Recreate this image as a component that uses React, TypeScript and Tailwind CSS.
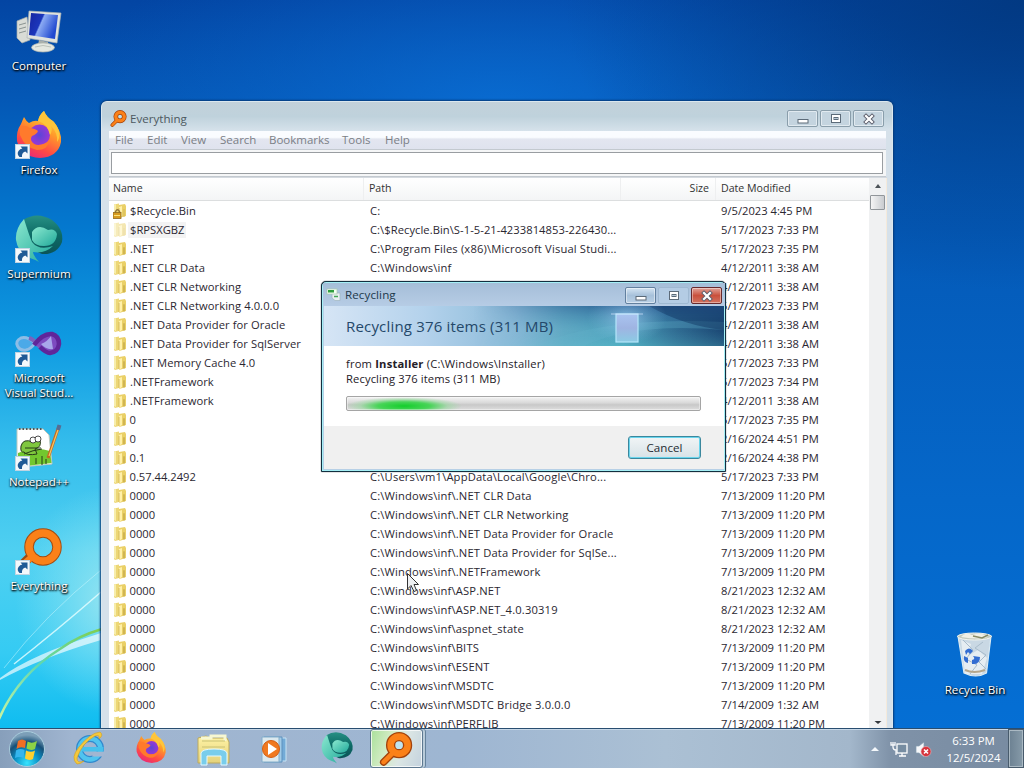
import React from "react";

const FONT = "font-['Open_Sans','Noto_Sans',sans-serif]";

const rows: [string, string, string][] = [
  ["$Recycle.Bin", "C:", "9/5/2023 4:45 PM"],
  ["$RPSXGBZ", "C:\\$Recycle.Bin\\S-1-5-21-4233814853-226430...", "5/17/2023 7:33 PM"],
  [".NET", "C:\\Program Files (x86)\\Microsoft Visual Studi...", "5/17/2023 7:35 PM"],
  [".NET CLR Data", "C:\\Windows\\inf", "4/12/2011 3:38 AM"],
  [".NET CLR Networking", "", "4/12/2011 3:38 AM"],
  [".NET CLR Networking 4.0.0.0", "", "5/17/2023 7:33 PM"],
  [".NET Data Provider for Oracle", "", "4/12/2011 3:38 AM"],
  [".NET Data Provider for SqlServer", "", "4/12/2011 3:38 AM"],
  [".NET Memory Cache 4.0", "", "5/17/2023 7:33 PM"],
  [".NETFramework", "", "5/17/2023 7:34 PM"],
  [".NETFramework", "", "4/12/2011 3:38 AM"],
  ["0", "", "5/17/2023 7:35 PM"],
  ["0", "", "2/16/2024 4:51 PM"],
  ["0.1", "", "2/16/2024 4:38 PM"],
  ["0.57.44.2492", "C:\\Users\\vm1\\AppData\\Local\\Google\\Chro...", "5/17/2023 7:33 PM"],
  ["0000", "C:\\Windows\\inf\\.NET CLR Data", "7/13/2009 11:20 PM"],
  ["0000", "C:\\Windows\\inf\\.NET CLR Networking", "7/13/2009 11:20 PM"],
  ["0000", "C:\\Windows\\inf\\.NET Data Provider for Oracle", "7/13/2009 11:20 PM"],
  ["0000", "C:\\Windows\\inf\\.NET Data Provider for SqlSe...", "7/13/2009 11:20 PM"],
  ["0000", "C:\\Windows\\inf\\.NETFramework", "7/13/2009 11:20 PM"],
  ["0000", "C:\\Windows\\inf\\ASP.NET", "8/21/2023 12:32 AM"],
  ["0000", "C:\\Windows\\inf\\ASP.NET_4.0.30319", "8/21/2023 12:32 AM"],
  ["0000", "C:\\Windows\\inf\\aspnet_state", "8/21/2023 12:32 AM"],
  ["0000", "C:\\Windows\\inf\\BITS", "7/13/2009 11:20 PM"],
  ["0000", "C:\\Windows\\inf\\ESENT", "7/13/2009 11:20 PM"],
  ["0000", "C:\\Windows\\inf\\MSDTC", "7/13/2009 11:20 PM"],
  ["0000", "C:\\Windows\\inf\\MSDTC Bridge 3.0.0.0", "7/14/2009 1:32 AM"],
  ["0000", "C:\\Windows\\inf\\PERFLIB", "7/13/2009 11:20 PM"],
];

function Wallpaper() {
  return (
    <svg className="absolute inset-0" width="1024" height="768" viewBox="0 0 1024 768">
      <defs>
        <linearGradient id="wl" x1="0" y1="0" x2="0" y2="1">
          <stop offset="0" stopColor="#0345a3" />
          <stop offset="0.13" stopColor="#0458b6" />
          <stop offset="0.3" stopColor="#0479cf" />
          <stop offset="0.45" stopColor="#109ce2" />
          <stop offset="0.58" stopColor="#35bdec" />
          <stop offset="0.72" stopColor="#4fd0f1" />
          <stop offset="0.85" stopColor="#35cbf3" />
          <stop offset="0.95" stopColor="#0ebcf0" />
        </linearGradient>
        <linearGradient id="wr" x1="0" y1="0" x2="0" y2="1">
          <stop offset="0" stopColor="#0345a3" />
          <stop offset="0.13" stopColor="#0458b6" />
          <stop offset="0.3" stopColor="#045ab8" />
          <stop offset="0.65" stopColor="#0567c9" />
          <stop offset="1" stopColor="#0570d6" />
        </linearGradient>
        <radialGradient id="wt">
          <stop offset="0" stopColor="#0a6fd6" stopOpacity=".85" />
          <stop offset="1" stopColor="#0a62c8" stopOpacity="0" />
        </radialGradient>
        <radialGradient id="wdark">
          <stop offset="0" stopColor="#02387f" stopOpacity=".9" />
          <stop offset="1" stopColor="#02387f" stopOpacity="0" />
        </radialGradient>
        <radialGradient id="wglow">
          <stop offset="0" stopColor="#a4e8f0" stopOpacity="0.9" />
          <stop offset="1" stopColor="#8ce5f5" stopOpacity="0" />
        </radialGradient>
        <linearGradient id="wgreen" x1="0" y1="1" x2="1" y2="0">
          <stop offset="0" stopColor="#c8f3a0" />
          <stop offset="0.5" stopColor="#5fd8b0" />
          <stop offset="1" stopColor="#82cf4c" />
        </linearGradient>
      </defs>
      <rect width="1024" height="768" fill="url(#wr)" />
      <rect width="106" height="768" fill="url(#wl)" />
      <ellipse cx="500" cy="110" rx="440" ry="190" fill="url(#wt)" />
      <ellipse cx="1024" cy="0" rx="460" ry="290" fill="url(#wdark)" />
      <ellipse cx="115" cy="600" rx="100" ry="115" fill="url(#wglow)" />
      <path d="M0 678Q30 655 101 633L101 640Q40 658 0 680Z" fill="#fff" opacity=".65" />
      <path d="M14 664Q55 632 101 592" stroke="#e8ffff" strokeWidth="1.5" fill="none" opacity=".8" />
      <path d="M4 668Q45 615 101 570" stroke="#d8fbff" strokeWidth="1" fill="none" opacity=".45" />
      <path d="M-1 719Q18 675 60 649Q78 636 102 629" stroke="url(#wgreen)" strokeWidth="2.5" fill="none" />
    </svg>
  );
}

function Shortcut() {
  return (
    <g transform="translate(0 31)">
      <rect x=".5" y=".5" width="14" height="14" fill="#f4f8fb" stroke="#c0d4e2" />
      <path d="M4.500 13Q1.500 10 3.500 7Q5 4.800 7.300 4.600L5.500 2.500H12.500V9.500L10.300 7.400Q6.500 8.500 7 13Z" fill="#1f5a96" />
    </g>
  );
}

function FirefoxArt() {
  return (
    <g>
      <defs>
        <linearGradient id="ffa" x1=".8" y1="0" x2=".3" y2="1">
          <stop offset="0" stopColor="#ffe34d" />
          <stop offset=".4" stopColor="#ff9a2a" />
          <stop offset=".75" stopColor="#ff4a45" />
          <stop offset="1" stopColor="#e8287a" />
        </linearGradient>
        <radialGradient id="ffb">
          <stop offset="0" stopColor="#5b45d8" />
          <stop offset="1" stopColor="#9a38d4" />
        </radialGradient>
      </defs>
      <path d="M5 13Q7 8 8 6Q10 10 13 12Q18 9 22 10Q24 3 28 0Q30 6 37 10Q46 20 45 31Q42 46 24 47Q5 46 1 30Q0 20 5 13Z" fill="url(#ffa)" />
      <circle cx="23.500" cy="24" r="10.500" fill="url(#ffb)" />
      <path d="M4 15Q10 14 14 17Q20 18 22 20Q21 23 16 25Q13 29 18 33Q25 36 34 29Q32 39 21 39Q9 37 4 24Z" fill="#ff7a2c" />
      <path d="M22 10Q31 12 34 24Q37 19 35 15Q42 22 41 31Q47 23 38 11Q31 7 28 0Q23 4 22 10Z" fill="#ffc53a" />
    </g>
  );
}

function SupermiumArt() {
  return (
    <g>
      <defs>
        <linearGradient id="sma" x1="0" y1="0" x2="1" y2="1">
          <stop offset="0" stopColor="#8be8cf" />
          <stop offset="1" stopColor="#20a99a" />
        </linearGradient>
        <linearGradient id="smb" x1="0" y1="0" x2="0" y2="1">
          <stop offset="0" stopColor="#279084" />
          <stop offset=".5" stopColor="#0d6b66" />
          <stop offset="1" stopColor="#0b5458" />
        </linearGradient>
      </defs>
      <path d="M8 5Q22-4 37 5Q49 14 47 27Q42 40 27 39Q10 34 8 5Z" fill="url(#smb)" />
      <path d="M9 4Q0 14 1 25Q3 38 15 43Q21 45 24 47Q18 40 18 37Q30 39 38 31Q24 36 17 27Q14 20 9 4Z" fill="url(#sma)" />
      <path d="M17 17Q23 8 33 15Q40 13 42 19Q41 31 29 31Q20 31 17 25Z" fill="url(#sma)" />
    </g>
  );
}

function EverythingArt() {
  return (
    <g>
      <path d="M14 28L3 39" stroke="#9b4a12" strokeWidth="9" strokeLinecap="round" />
      <circle cx="26" cy="19" r="14" fill="none" stroke="#a34b10" strokeWidth="9.500" />
      <circle cx="26" cy="19" r="14" fill="none" stroke="#fb8119" strokeWidth="7.500" />
      <path d="M15 29L3 39" stroke="#fb8119" strokeWidth="6.500" strokeLinecap="round" />
    </g>
  );
}

function MagnifierArt() {
  return (
    <g>
      <path d="M17 28L6 39" stroke="#a3430c" strokeWidth="9.500" strokeLinecap="round" />
      <circle cx="26" cy="17" r="11" fill="#bfe3f0" stroke="#a3430c" strokeWidth="12" />
      <circle cx="26" cy="17" r="11" fill="none" stroke="#fb8119" strokeWidth="8.500" />
      <path d="M18 27L6 39" stroke="#fb8119" strokeWidth="6" strokeLinecap="round" />
    </g>
  );
}

function ComputerArt() {
  return (
    <g>
      <defs>
        <linearGradient id="scr" x1="0" y1="0" x2="1" y2=".4">
          <stop offset="0" stopColor="#1525a0" />
          <stop offset=".45" stopColor="#1b36bb" />
          <stop offset=".5" stopColor="#8baaf3" />
          <stop offset="1" stopColor="#2149d0" />
        </linearGradient>
      </defs>
      <path d="M2 12L12 8L15 31L7 34L2 29Z" fill="#d9dcd6" stroke="#a8adaa" strokeWidth=".7" />
      <path d="M4 16L11 14M4 20L11 18M4 24L11 22" stroke="#8b9492" />
      <path d="M14 2L46 4L42 34L12 29Z" fill="#e0e3de" stroke="#aab1b5" strokeWidth=".7" />
      <path d="M16 4L43 6L40 30L14 26Z" fill="url(#scr)" />
      <path d="M24 31L33 33L34 37L23 36Z" fill="#a9afab" />
      <ellipse cx="28" cy="38.500" rx="11.500" ry="4.500" fill="#e4e7e0" stroke="#aeb3ad" strokeWidth=".7" />
      <path d="M20 38Q28 35 36 38" stroke="#bcc2ba" fill="none" />
    </g>
  );
}

function VisualStudioArt() {
  return (
    <g>
      <path d="M20 22Q12 15 6 17Q0 20 2.500 25Q5 30 11 29Q16 28 20 22Z" fill="#4ba9e8" stroke="#8dbde6" strokeWidth="3" />
      <path d="M14 17Q18 18 22 23Q28 29 34 31.500" stroke="#7b62bd" strokeWidth="4" fill="none" />
      <path d="M19 24Q28 12 37 13Q44 15 44 23Q43 31 35 32Q31 32 25 26" fill="#7d4bc0" stroke="#60269a" strokeWidth="4.500" />
      <path d="M26 23Q33 20 36 15L38 28Q31 29 26 23Z" fill="#a8a7ea" />
    </g>
  );
}

function NotepadArt() {
  return (
    <g>
      <path d="M2 5H28L34 11L37 40L17 42L2 43Z" fill="#fff" stroke="#bdc9be" />
      <path d="M3 29Q20 22 35 27L36.500 39L3 43Z" fill="#73c72f" />
      <path d="M4 5H28" stroke="#555" strokeWidth="2" strokeDasharray="1.500 2" />
      <path d="M6 22Q8 14 18 18Q20 13 25 16Q27 23 20 25L22 30Q12 32 9 28Q5 29 6 22Z" fill="#80c73e" stroke="#273819" strokeWidth="1" />
      <circle cx="18" cy="16" r="3" fill="#fff" stroke="#222" strokeWidth=".8" />
      <circle cx="23" cy="15" r="3" fill="#fff" stroke="#222" strokeWidth=".8" />
      <path d="M10 24H26M9 30Q18 26 27 25M21 34V40M27 32V41M31 35V40" stroke="#263e18" fill="none" />
      <path d="M44 2L33 34" stroke="#c4681f" strokeWidth="3" />
      <path d="M44 3L34 32" stroke="#f6c661" strokeWidth="1.200" />
      <path d="M44.500 1L43 6" stroke="#566d94" strokeWidth="4" />
    </g>
  );
}

function DesktopIcon({ label, children, shortcut = true }: { label: string; children: React.ReactNode; shortcut?: boolean }) {
  return (
    <div className="flex h-[104px] flex-col items-center">
      <svg className="h-12 w-12 shrink-0 overflow-visible" viewBox="0 0 48 48">
        {children}
        {shortcut && <Shortcut />}
      </svg>
      <div className="mt-[1px] w-[86px] shrink-0 whitespace-pre-line text-center text-[11.6px] leading-[15px] text-white [text-shadow:1px_1px_2px_#000,0_1px_2px_#000]">
        {label}
      </div>
    </div>
  );
}

function Folder({ kind }: { kind: number }) {
  return (
    <svg className="h-4 w-[14px]" viewBox="0 0 14 16">
      <g opacity={kind === 1 ? 0.5 : 1}>
        <path d="M1 1.500L6 .5V14L2 15L1 14Z" fill="#edd776" />
        <path d="M1 2L3 1V14L1 13Z" fill="#f7edac" />
        <path d="M6 2L12 1L13 3V13L6 15Z" fill="#ead067" />
        <path d="M6 4L9 3V13L6 15Z" fill="#fff0a8" />
        <path d="M6 5V14M11 6V14" stroke="#cfb254" strokeWidth=".8" />
        {kind > 1 && <path d="M10 6.500H12V13H10Z" fill="#d0b552" />}
      </g>
      {kind === 0 && (
        <g>
          <path d="M2.500 10V8.500Q4.500 5 6.500 8.500V10" stroke="#91743a" fill="none" strokeWidth="1.500" />
          <rect x="0" y="9.500" width="8" height="6" fill="#d79a1e" stroke="#8e6a20" strokeWidth=".8" />
          <path d="M1 12.500H7" stroke="#fae178" />
        </g>
      )}
    </svg>
  );
}

function Control({ type, dialog = false }: { type: "min" | "max" | "close"; dialog?: boolean }) {
  const closeRed = dialog && type === "close";
  return (
    <div
      className={
        "flex h-[17px] w-[31px] items-center justify-center rounded-[2px] border " +
        (closeRed
          ? "border-[#682a2e] bg-gradient-to-b from-[#dfa299] via-[#c9503d] to-[#d27360] shadow-[inset_0_0_0_1px_#ffffff66]"
          : dialog && type === "max"
            ? "border-[#9fb9d2] bg-[#b4cce4]"
            : dialog
              ? "border-[#62809f] bg-gradient-to-b from-[#d4e4f2] via-[#a7c1da] to-[#bad0e5] shadow-[inset_0_0_0_1px_#ffffff77]"
              : "border-[#8a9eab] bg-[#c4d4df] shadow-[inset_0_0_0_1px_#e1eaf0]")
      }
    >
      <svg className="h-3 w-3" viewBox="0 0 12 12">
        {type === "min" && <rect x="1" y="6.500" width="10" height="3.500" fill="#fff" stroke="#5c6b79" />}
        {type === "max" && (
          <g fill="#fff" stroke="#5c6b79">
            <rect x="1.500" y="1.500" width="9" height="8" />
            <rect x="4" y="4.500" width="4" height="2" fill="#b6c7d4" />
          </g>
        )}
        {type === "close" && (
          <g strokeLinecap="square">
            <path d="M3 3L9 9M9 3L3 9" stroke="#5b5d6b" strokeWidth="4" />
            <path d="M3 3L9 9M9 3L3 9" stroke="#fff" strokeWidth="2.200" />
          </g>
        )}
      </svg>
    </div>
  );
}

function EverythingWindow() {
  return (
    <div className="absolute left-[101px] top-[101px] flex h-[627px] w-[792px] flex-col overflow-hidden rounded-t-[6px] border border-b-0 border-[#dbe7ee] bg-[#d6e1ea] pl-[7px] pr-[6px] shadow-[0_0_2px_1px_#073b79]">
      <div className="-ml-[7px] -mr-[6px] flex h-[29px] shrink-0 items-center bg-gradient-to-b from-[#c3d1da] via-[#bfd2dc] to-[#d6e2eb] pl-2 pr-2 pt-[5px]">
        <svg className="mb-[2px] h-[17px] w-[17px]" viewBox="0 0 44 44"><MagnifierArt /></svg>
        <span className="ml-[3px] text-[11.6px] text-[#4d5960]">Everything</span>
        <div className="ml-auto flex gap-[2px] pb-[1px]"><Control type="min" /><Control type="max" /><Control type="close" /></div>
      </div>
      <div className="flex h-[18px] shrink-0 items-center bg-gradient-to-b from-[#fafcff] from-35% via-[#e3e6f0] via-45% to-[#dfe3ee] pl-[6px] text-[11.5px] text-[#7b7f86]">
        <span className="w-[32px]">File</span><span className="w-[34px]">Edit</span><span className="w-[39px]">View</span><span className="w-[49px]">Search</span><span className="w-[73px]">Bookmarks</span><span className="w-[43px]">Tools</span><span>Help</span>
      </div>
      <div className="flex h-[28px] shrink-0 items-center border-y border-[#c3c9cf] bg-[#f5f6f7] pl-[2px] pr-[3px]">
        <div className="h-[22px] flex-1 border border-[#999da1] bg-white" />
      </div>
      <div className="-mr-px flex min-h-0 flex-1 border-t border-[#d4d9df] bg-white">
        <div className="min-w-0 flex-1 overflow-hidden">
          <div className="flex h-[23px] items-center border-b border-[#dcdedf] bg-gradient-to-b from-white to-[#f4f5f6] text-[10.6px] text-[#333]">
            <span className="flex h-full w-[255px] items-center border-r border-[#eeeff0] pl-1">Name</span>
            <span className="flex h-full w-[257px] items-center border-r border-[#eeeff0] pl-[5px]">Path</span>
            <span className="flex h-full w-[95px] items-center justify-end border-r border-[#eeeff0] pr-[6px]">Size</span>
            <span className="pl-[5px]">Date Modified</span>
          </div>
          {rows.map(([name, path, date], i) => (
            <div key={i} className="flex h-[19px] items-center whitespace-nowrap text-[11.2px] leading-[19px] text-[#2b2731]">
              <div className="flex w-[261px] items-center pl-[4px]">
                <Folder kind={i} />
                <span className={i === 1 ? "ml-px bg-[#f3f3f3] px-[2px] leading-[16px]" : i >= 11 ? "ml-[2.5px]" : "ml-[3px] tracking-[0.08px]"}>{name}</span>
              </div>
              <span className={i === 1 ? "w-[351px] tracking-[0.05px]" : "w-[351px] tracking-[0.16px]"}>{path}</span>
              <span>{date}</span>
            </div>
          ))}
        </div>
        <div className="flex w-[17px] shrink-0 flex-col items-center bg-[#f0f1f2]">
          <svg className="h-[17px] w-4" viewBox="0 0 16 17"><path d="M5 10L8 6L11 10Z" fill="#4c5358" /></svg>
          <div className="h-[15px] w-[15px] rounded-[1px] border border-[#91969a] bg-gradient-to-r from-[#f5f5f5] to-[#c9ccd0]" />
          <svg className="mt-auto h-3 w-4" viewBox="0 0 16 12"><path d="M4.500 5H11.500L8 8Z" fill="#34393d" /></svg>
        </div>
        <div className="w-px bg-[#f5eadb]" />
      </div>
    </div>
  );
}

function RecycleDialog() {
  return (
    <div className="absolute left-[321px] top-[281px] flex h-[191px] w-[405px] flex-col rounded-[5px] rounded-b-[1px] border border-[#122f40] bg-[#b7d0e6] pb-[2px] pl-[2px] pr-px shadow-[inset_0_0_0_1px_#a5eff5,0_0_1px_#000]">
      <div className="mx-[-1px] mt-px flex h-[23px] shrink-0 items-center bg-gradient-to-b from-[#a5bed8] to-[#b6cce5] pl-[3px] pr-[3px] pt-[2px]">
        <svg className="mb-[2px] h-[15px] w-[15px]" viewBox="0 0 15 15">
          <path d="M6 6H14V13.500H9L6 11Z" fill="#e9f0f2" stroke="#9fb4c0" strokeWidth=".7" />
          <rect x="1" y="2" width="10" height="5" fill="#f3fff1" stroke="#a9c9b0" strokeWidth=".7" />
          <rect x="2" y="3" width="6" height="2.500" fill="#2f9e3f" />
          <path d="M8 9.500H12" stroke="#45a858" strokeWidth="1.500" />
        </svg>
        <span className="mb-px ml-1 text-[11.6px] tracking-[0.1px] text-[#21394c]">Recycling</span>
        <div className="ml-auto flex gap-[2px]"><Control type="min" dialog /><Control type="max" dialog /><Control type="close" dialog /></div>
      </div>
      <div className="relative flex h-10 shrink-0 items-center overflow-hidden bg-[linear-gradient(90deg,#d6e5f5_0%,#b4d2ec_25%,#8abad8_48%,#65adc6_60%,#4da6bd_75%,#2d668c_88%,#123765_100%)] pl-[22px]">
        <svg className="absolute inset-0" width="400" height="40" viewBox="0 0 400 40">
          <defs>
            <linearGradient id="shade" x1="0" y1="0" x2="0" y2="1"><stop stopColor="#2a5a92" stopOpacity=".9" /><stop offset=".6" stopColor="#3f88b0" stopOpacity=".2" /><stop offset="1" stopColor="#5cc3cf" stopOpacity=".35" /></linearGradient>
            <linearGradient id="fade" x1="0" y1="0" x2="1" y2="0"><stop stopColor="#000" /><stop offset=".6" stopColor="#fff" /></linearGradient>
            <mask id="fademask"><rect x="150" width="250" height="40" fill="url(#fade)" /></mask>
            <linearGradient id="glass" x1="0" y1="0" x2="0" y2="1"><stop stopColor="#a9c4f0" /><stop offset=".5" stopColor="#9fb4e2" /><stop offset="1" stopColor="#8bcbe4" /></linearGradient>
            <radialGradient id="halo"><stop stopColor="#b5d7ff" stopOpacity=".6" /><stop offset="1" stopColor="#83bedd" stopOpacity="0" /></radialGradient>
          </defs>
          <g mask="url(#fademask)">
            <rect x="150" width="250" height="40" fill="url(#shade)" />
            <path d="M210 40Q280 10 400 16V24Q310 16 260 40Z" fill="#68b9cf" opacity=".25" />
            <path d="M325 0H400V24Q360 20 325 0Z" fill="#092a58" opacity=".4" />
          </g>
          <ellipse cx="303" cy="12" rx="40" ry="26" fill="url(#halo)" />
          <rect x="292" y="8" width="22" height="28" fill="url(#glass)" stroke="#b5e6fb" strokeWidth="1.200" />
          <path d="M287 8H319" stroke="#d5e5ff" opacity=".7" />
        </svg>
        <span className="relative text-[15px] tracking-[0.180px] text-[#24486a]">Recycling 376 items (311 MB)</span>
      </div>
      <div className="h-20 shrink-0 bg-white px-[22px] pt-[10px] text-[11.2px] leading-[15px] text-[#242027]">
        <div className="tracking-[0.18px]">from <b className="font-bold">Installer</b> (C:\Windows\Installer)</div>
        <div className="tracking-[0.12px]">Recycling 376 items (311 MB)</div>
        <div className="mt-[10px] h-[15px] w-[355px] rounded-[2px] border border-[#a5a5a5] bg-[radial-gradient(ellipse_58px_9px_at_57px_9px,#13ce2b_0%,#48d458_45%,#9bd9a2aa_75%,transparent_100%),linear-gradient(#f3f3f3,#d9d9d9_45%,#c8c8c8_60%,#dedede)] shadow-[inset_0_0_0_1px_#ffffff66]" />
      </div>
      <div className="flex flex-1 items-center justify-end bg-[#f0f0f0] pr-[23px]">
        <div className="flex h-[23px] w-[73px] items-center justify-center rounded-[3px] border border-[#3b879d] bg-gradient-to-b from-[#f1f5f6] to-[#d7e2e7] text-[11.6px] text-[#252c32] shadow-[inset_0_0_0_1px_#69d5ed]">Cancel</div>
      </div>
    </div>
  );
}

function Taskbar() {
  return (
    <div className="absolute inset-x-0 bottom-0 flex h-10 items-center border-t border-[#294d70] bg-[linear-gradient(90deg,#879fbb_0%,#a0b5d0_7%,#9eb6d2_45%,#abc0d4_65%,#a3b7cb_83%,#7f92a8_87%,#788ba1_100%)] shadow-[inset_0_1px_0_#c7d8e8]">
      <svg className="h-full w-[370px]" viewBox="0 0 370 39">
        <defs>
          <radialGradient id="orb" cx=".5" cy=".9" r=".8"><stop stopColor="#37e4ff" /><stop offset=".45" stopColor="#098dc3" /><stop offset=".75" stopColor="#175077" /><stop offset="1" stopColor="#7c9fb8" /></radialGradient>
          <linearGradient id="paper" x1="0" y1="0" x2="0" y2="1"><stop stopColor="#fff3a5" /><stop offset="1" stopColor="#e4d27b" /></linearGradient>
        </defs>
        <circle cx="27" cy="20" r="17.500" fill="url(#orb)" stroke="#aacddd" />
        <path d="M18 12Q22 9 26 12L25 19Q20 17 16.500 20Z" fill="#f06e24" />
        <path d="M27.500 12.500Q32 15 37 12L35 20Q31 22 26.500 19.500Z" fill="#8cd346" />
        <path d="M16 21.500Q20 19 24.500 21L23.500 29Q19 27 15 29Z" fill="#35b5ed" />
        <path d="M26 21.500Q31 24 35 21.500L33 30Q29 32 25 29.500Z" fill="#ffd02f" />
        <g>
          <circle cx="90" cy="20" r="10.500" fill="none" stroke="#3189ce" strokeWidth="7" />
          <circle cx="90" cy="20" r="10.500" fill="none" stroke="#50c4ef" strokeWidth="4.500" />
          <path d="M94 22.500H107L103 27.500H92Z" fill="#a2b6d1" />
          <rect x="82" y="18" width="21.500" height="4.500" fill="#47c1ed" />
          <path d="M77 35Q70 29 79 18Q90 4 100 3Q104 6 99 10Q100 5 95 7Q82 14 77 29Q77 35 84 32Q81 35 77 35Z" fill="#f4c83c" stroke="#ce9d26" strokeWidth=".6" />
        </g>
        <g transform="translate(136 3) scale(.66)"><FirefoxArt /></g>
        <g>
          <path d="M198 9L206 7L210 9H227L229 13V34H198Z" fill="url(#paper)" stroke="#bba95f" />
          <path d="M201 9H211V7H225V12" fill="none" stroke="#f7f7d1" strokeWidth="3" />
          <path d="M202 12H225M202 18H225" stroke="#c8c174" />
          <path d="M201 36V24Q202 20 214 20Q226 20 227 24V36H221V27H207V36Z" fill="#79cdeb" stroke="#e3f8ff" />
        </g>
        <g>
          <path d="M267 9H286V32H267Z" fill="#73abd7" stroke="#c8e4f5" /><path d="M264 8H282V33H264Z" fill="#a2cbe7" stroke="#5c90bd" />
          <path d="M262 8H279V33H262Z" fill="#dce9ee" stroke="#83adca" /><circle cx="271" cy="20" r="8.500" fill="#f07920" stroke="#d45e14" />
          <path d="M268 14L277 20L268 26Z" fill="#fff" />
        </g>
        <g transform="translate(321 3) scale(.67)"><SupermiumArt /></g>
      </svg>
      <div className="flex h-full w-[53px] items-center justify-center rounded-[3px] border border-[#5d7890] bg-[linear-gradient(110deg,#a9e09a,#d4ecc6_35%,#dbe6e4_60%,#c4d2de)] shadow-[inset_0_0_0_1px_#ffffffbb,2px_0_0_#b9cbd9,3px_0_0_#65829c]">
        <svg className="mr-px h-[34px] w-[34px]" viewBox="0 0 44 44"><MagnifierArt /></svg>
      </div>
      <div className="ml-auto flex h-full items-center text-white">
        <svg className="h-8 w-[66px]" viewBox="0 0 66 32">
          <path d="M5 18L9 14L13 18Z" fill="#f4f8fb" />
          <g transform="translate(2 0)">
            <path d="M25 9V14Q25 17 28 17V22M23 9V12H27V9" stroke="#f6f8fb" strokeWidth="1.300" fill="none" />
            <rect x="29" y="11" width="10" height="9" fill="#768ca1" stroke="#fff" strokeWidth="1.300" />
            <path d="M31 23H38M34 20V23" stroke="#fff" strokeWidth="1.300" />
          </g>
          <g transform="translate(2 0)">
            <path d="M48 13H51L56 9V24L51 20H48Z" fill="#f6f7fa" stroke="#839baf" strokeWidth=".7" />
            <circle cx="58" cy="18.500" r="5" fill="#d7323b" stroke="#e9b4b8" strokeWidth=".6" /><path d="M56 16.500L60 20.500M60 16.500L56 20.500" stroke="#fff" strokeWidth="1.600" />
          </g>
        </svg>
        <div className="ml-[7px] w-[69px] text-center text-[11.4px] leading-[17px]">6:33 PM<br />12/5/2024</div>
        <div className="h-full w-[16px] border border-[#485b6c] bg-gradient-to-r from-[#6c8192] to-[#879ba9] shadow-[inset_0_0_0_1px_#aab9c3]" />
      </div>
    </div>
  );
}

function RecycleBin() {
  return (
    <div className="absolute left-[931px] top-[632px] flex w-[88px] flex-col items-center">
      <svg className="h-[49px] w-12" viewBox="0 0 48 49">
        <path d="M7 4H40L35.500 41Q25 47 13 41Z" fill="#c9d8e4" stroke="#dcebf3" strokeWidth="1.200" />
        <path d="M10 8L20 12L17 24L27 18L36 26L31 42H14Z" fill="#e6edf2" />
        <path d="M12 8L22 18L15 27L26 33L19 42M32 10L24 16L35 23L28 30L35 37" stroke="#a9bccb" fill="none" />
        <ellipse cx="23.500" cy="4.500" rx="17" ry="3.500" fill="#c1c9bd" stroke="#f3f5ef" />
        <path d="M10 5Q15-1 21 3Q30-1 37 5Q29 8 10 5Z" fill="#f0f0e6" />
        <path d="M22 4L31 6L37 3" stroke="#858b66" strokeWidth="1.500" fill="none" />
        <path d="M14 19Q18 14 22 19L19 22L17 20L15 23ZM22 24L29 25Q29 33 21 32V28Q25 27 22 24ZM13 24L17 26L17 31Q12 30 13 24Z" fill="#336dd2" />
        <path d="M14 38Q23 42 34 38" stroke="#b4a68c" fill="none" strokeWidth="2" />
      </svg>
      <span className="mt-[1px] whitespace-nowrap text-[11.6px] leading-[15px] text-white [text-shadow:1px_1px_2px_#000,0_1px_2px_#000]">Recycle Bin</span>
    </div>
  );
}

export default function App() {
  return (
    <div className={"relative h-[768px] w-[1024px] overflow-hidden " + FONT}>
      <Wallpaper />
      <div className="absolute left-0 top-[9px] flex w-[78px] flex-col">
        <DesktopIcon label="Computer" shortcut={false}><ComputerArt /></DesktopIcon>
        <DesktopIcon label="Firefox"><g transform="translate(1 -2)"><FirefoxArt /></g></DesktopIcon>
        <DesktopIcon label="Supermium"><g transform="translate(0 -2)"><SupermiumArt /></g></DesktopIcon>
        <DesktopIcon label={"Microsoft\nVisual Stud..."}><VisualStudioArt /></DesktopIcon>
        <DesktopIcon label="Notepad++"><g transform="translate(0 -1)"><NotepadArt /></g></DesktopIcon>
        <DesktopIcon label="Everything"><g transform="translate(2 -1)"><EverythingArt /></g></DesktopIcon>
      </div>
      <EverythingWindow />
      <RecycleDialog />
      <RecycleBin />
      <Taskbar />
      <svg className="absolute left-[406px] top-[572px]" width="14" height="22" viewBox="0 0 14 22">
        <path d="M1.500 1.500V17L5 13.500L8 19.500L10.500 18.500L8 12.500H12.500Z" fill="#eef0f2" stroke="#333" />
      </svg>
    </div>
  );
}
